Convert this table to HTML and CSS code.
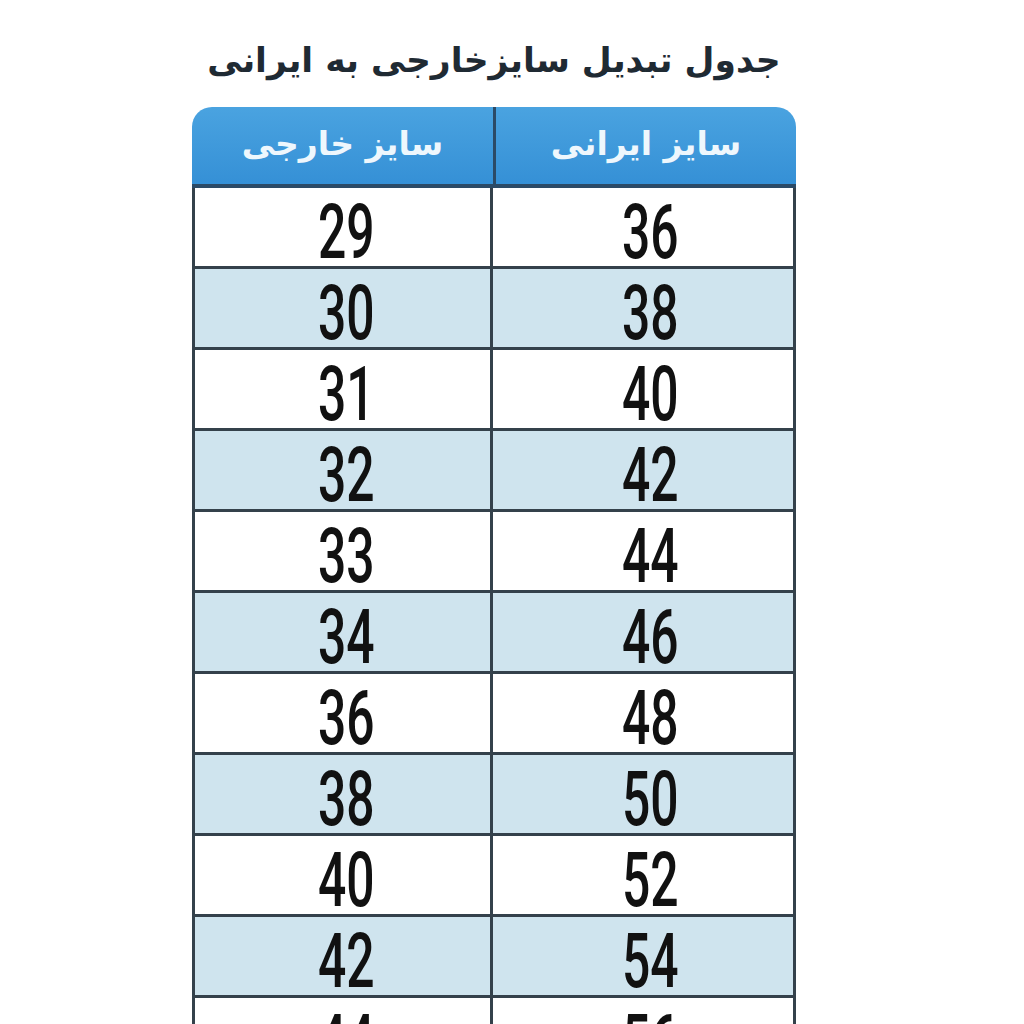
FILE: index.html
```html
<!DOCTYPE html>
<html lang="fa">
<head>
<meta charset="utf-8">
<link rel="stylesheet" href="styles.css">
</head>
<body>
<main class="page">
  <h1 class="title" dir="rtl">جدول تبدیل سایزخارجی به ایرانی</h1>
  <div class="table" dir="rtl">
    <div class="row head">
      <div class="cell">سایز ایرانی</div>
      <div class="cell">سایز خارجی</div>
    </div>
    <div class="row"><div class="cell"><span class="num">36</span></div><div class="cell"><span class="num">29</span></div></div>
    <div class="row alt"><div class="cell"><span class="num">38</span></div><div class="cell"><span class="num">30</span></div></div>
    <div class="row"><div class="cell"><span class="num">40</span></div><div class="cell"><span class="num">31</span></div></div>
    <div class="row alt"><div class="cell"><span class="num">42</span></div><div class="cell"><span class="num">32</span></div></div>
    <div class="row"><div class="cell"><span class="num">44</span></div><div class="cell"><span class="num">33</span></div></div>
    <div class="row alt"><div class="cell"><span class="num">46</span></div><div class="cell"><span class="num">34</span></div></div>
    <div class="row"><div class="cell"><span class="num">48</span></div><div class="cell"><span class="num">36</span></div></div>
    <div class="row alt"><div class="cell"><span class="num">50</span></div><div class="cell"><span class="num">38</span></div></div>
    <div class="row"><div class="cell"><span class="num">52</span></div><div class="cell"><span class="num">40</span></div></div>
    <div class="row alt"><div class="cell"><span class="num">54</span></div><div class="cell"><span class="num">42</span></div></div>
    <div class="row"><div class="cell"><span class="num">56</span></div><div class="cell"><span class="num">44</span></div></div>
  </div>
</main>
</body>
</html>
```
FILE: styles.css
```css
html, body {
  margin: 0;
  padding: 0;
  background: #ffffff;
  overflow: hidden;
}
.page {
  width: 1024px;
  height: 1024px;
  display: flex;
  flex-direction: column;
  align-items: center;
  overflow: hidden;
}
.title {
  margin: 34px 0 0 -36px;
  height: 73px;
  flex-shrink: 0;
  font-family: "DejaVu Sans", sans-serif;
  font-weight: bold;
  font-size: 34.5px;
  line-height: 52px;
  color: #1f2a33;
}
.table {
  width: 604px;
  display: flex;
  flex-direction: column;
  margin-left: -36px;
  flex-shrink: 0;
}
.row {
  display: grid;
  grid-template-columns: 303px 301px;
  height: 81px;
  flex-shrink: 0;
  background: #ffffff;
  border-left: 3px solid #34414b;
  border-right: 3px solid #34414b;
  border-bottom: 3px solid #34414b;
  box-sizing: border-box;
}
.row.alt {
  background: #cfe4ee;
}
.row.head {
  background: linear-gradient(#4aa3e0, #3590d6);
  border: none;
  border-bottom: 4px solid #2b4a66;
  border-radius: 20px 20px 0 0;
}
.cell {
  display: flex;
  align-items: center;
  justify-content: center;
  border-left: 3px solid #34414b;
}
.row .cell:last-child {
  border-left: none;
}
.head .cell {
  font-family: "DejaVu Sans", sans-serif;
  font-weight: bold;
  font-size: 33px;
  color: #eef7fd;
  border-left: 3px solid #2b4a66;
  padding-bottom: 4px;
}
.head .cell:last-child {
  border-left: none;
}
.num {
  display: inline-block;
  font-family: "Roboto", "Liberation Sans", sans-serif;
  font-weight: 500;
  font-size: 76px;
  line-height: 66px;
  color: #111111;
  transform: scaleX(0.655);
  padding-top: 10px;
  margin-left: 14px;
}
```
